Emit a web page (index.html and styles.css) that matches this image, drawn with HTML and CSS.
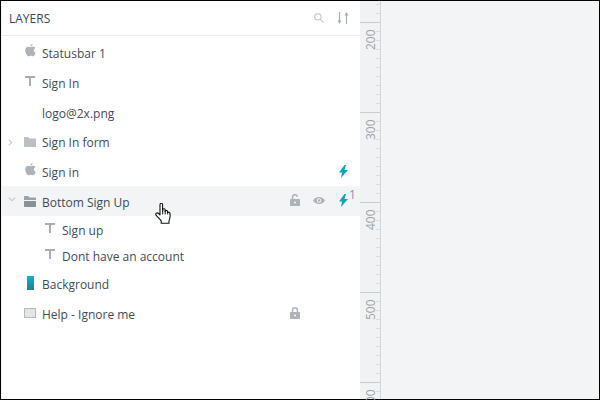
FILE: index.html
```html
<!DOCTYPE html>
<html lang="en">
<head>
<meta charset="utf-8">
<title>Layers</title>
<link rel="stylesheet" href="styles.css">
</head>
<body>
<svg class="defs" width="0" height="0" aria-hidden="true">
  <symbol id="apple" viewBox="0 0 12 14"><path d="M8.300 0c.1 1.300-1 2.600-2.300 2.600C5.900 1.300 7.100.1 8.300 0zM6 3.500c.7 0 1.500-.6 2.700-.6 1 0 2 .5 2.600 1.400-2.200 1.300-1.900 4.400.5 5.400-.6 1.500-1.900 3.700-3.100 3.700-.9 0-1.200-.6-2.300-.6s-1.500.6-2.300.6C2.600 13.400.2 10.200.2 7.100.2 4.600 1.800 3 3.500 3c1.100 0 1.900.5 2.500.5z"/></symbol>
  <symbol id="folder" viewBox="0 0 12 10"><path d="M0 .8A.8.800 0 0 1 .8 0h3.400l1.200 1.500h5.800a.8.800 0 0 1 .8.800v6.900a.8.800 0 0 1-.8.800H.8a.8.800 0 0 1-.8-.8z"/></symbol>
  <symbol id="folder-open" viewBox="0 0 12 11"><path d="M0 .8A.8.800 0 0 1 .8 0h3.400l1.200 1.500h5.800a.8.800 0 0 1 .8.800V4H0z"/><path class="folder-front" d="M0 5h12v5.200a.8.800 0 0 1-.8.800H.8a.8.800 0 0 1-.8-.8z"/></symbol>
  <symbol id="type" viewBox="0 0 10 10"><path d="M0 0h10v2H6v8H4V2H0z"/></symbol>
  <symbol id="bolt" viewBox="0 0 9 13"><path d="M5.500 0 0 7.500h3L2 13l7-8H5.500L7 0z"/></symbol>
  <symbol id="lock" viewBox="0 0 10 12"><path fill-rule="evenodd" d="M1.800 5V3.200a3.200 3.200 0 0 1 6.400 0V5h1a.8.800 0 0 1 .8.800v5.400a.8.800 0 0 1-.8.800H.8a.8.800 0 0 1-.8-.8V5.800A.8.800 0 0 1 .8 5zm1.500 0h3.400V3.200a1.700 1.700 0 0 0-3.400 0zM5 7.500a1 1 0 1 0 0 2 1 1 0 0 0 0-2z"/></symbol>
  <symbol id="unlock" viewBox="0 0 10 12"><path fill-rule="evenodd" d="M1.800 5V3.200a3.200 3.200 0 0 1 6.300-.8L6.700 3a1.700 1.700 0 0 0-3.400.2V5h5.900a.8.800 0 0 1 .8.800v5.400a.8.800 0 0 1-.8.800H.8a.8.800 0 0 1-.8-.8V5.800A.8.800 0 0 1 .8 5zM5 7.500a1 1 0 1 0 0 2 1 1 0 0 0 0-2z"/></symbol>
  <symbol id="eye" viewBox="0 0 12 7"><path fill-rule="evenodd" d="M6 0c2.600 0 4.800 1.500 6 3.500C10.800 5.500 8.600 7 6 7S1.200 5.500 0 3.500C1.200 1.500 3.400 0 6 0zm0 1.300a2.200 2.200 0 1 0 0 4.400 2.200 2.200 0 0 0 0-4.400z"/><circle cx="6" cy="3.500" r="1.200"/></symbol>
</svg>

<div class="frame">
  <section class="panel">
    <header class="panel-head">
      <h1 class="panel-title">LAYERS</h1>
      <div class="head-tools">
        <svg class="tool-search" viewBox="0 0 10 10"><circle cx="3.800" cy="3.800" r="3.200"/><path d="M6.200 6.200l3.500 3.500"/></svg>
        <svg class="tool-sort" viewBox="0 0 12 12"><path d="M2.500 0v9M9.500 12V3"/><path class="sort-head" d="M.5 8.500h4l-2 3.500zM7.500 3.500h4l-2-3.500z"/></svg>
      </div>
    </header>
    <ul class="layers">
      <li class="row"><span class="slot"><svg class="ico apple"><use href="#apple"/></svg></span><span class="name">Statusbar 1</span></li>
      <li class="row"><span class="slot"><svg class="ico type"><use href="#type"/></svg></span><span class="name">Sign In</span></li>
      <li class="row"><span class="slot"></span><span class="name">logo@2x.png</span></li>
      <li class="row"><svg class="caret caret-right" viewBox="0 0 5 7"><path d="M.7.7l3 2.800-3 2.800"/></svg><span class="slot"><svg class="ico folder"><use href="#folder"/></svg></span><span class="name">Sign In form</span></li>
      <li class="row"><span class="slot"><svg class="ico apple"><use href="#apple"/></svg></span><span class="name">Sign in</span><span class="actions"><svg class="bolt"><use href="#bolt"/></svg></span></li>
      <li class="row active"><svg class="caret caret-down" viewBox="0 0 8 5"><path d="M.7.7l3.300 3 3.300-3"/></svg><span class="slot"><svg class="ico folder-dark"><use href="#folder-open"/></svg></span><span class="name">Bottom Sign Up</span>
        <span class="actions"><svg class="lock"><use href="#unlock"/></svg><svg class="eye"><use href="#eye"/></svg><svg class="bolt"><use href="#bolt"/></svg><sup class="count">1</sup></span>
      </li>
      <li class="row child"><span class="slot"><svg class="ico type"><use href="#type"/></svg></span><span class="name">Sign up</span></li>
      <li class="row child"><span class="slot"><svg class="ico type"><use href="#type"/></svg></span><span class="name">Dont have an account</span></li>
      <li class="row"><span class="slot"><span class="swatch"></span></span><span class="name">Background</span></li>
      <li class="row"><span class="slot"><span class="rect"></span></span><span class="name">Help - Ignore me</span><span class="actions"><svg class="lock"><use href="#lock"/></svg></span></li>
    </ul>
    <svg class="hand" viewBox="0 0 18 24" preserveAspectRatio="none">
      <path d="M5 1.800c0-1 .6-1.500 1.300-1.500S7.600.800 7.600 1.800V9l.3-2.300c.8-.7 2-.5 2.300.5v2c.5-1.300 2.100-1.200 2.400 0v1.500c.5-1 2-1 2.300.3.400 2.500.2 5.800-.9 8.500v2.700H6.200v-2.700C4.500 17.500 3 15.500 1.300 13.500.3 12.300.7 11 1.800 10.800c1-.2 2.200.9 3.200 2.200z" fill="#fff" stroke="#111" stroke-width="1.100" stroke-linejoin="round"/>
      <path d="M7.700 7.500v5M10.200 8v4.500M12.700 9.500v3" fill="none" stroke="#111" stroke-width="1"/>
    </svg>
  </section>
  <aside class="ruler"><svg class="ruler-svg" id="ruler" width="20" height="398"></svg></aside>
  <main class="canvas"></main>
</div>
<script src="ruler.js"></script>
</body>
</html>
```

FILE: ruler.js
```js
var svg = document.getElementById('ruler');
var out = '';
for (var i = 0; i < 46; i++) {
  var y = 3 + i * 9;
  var major = (i - 2) % 10 === 0;
  if (y > 398) break;
  out += '<line x1="' + (major ? 0 : 16) + '" x2="20" y1="' + (y + 0.5) + '" y2="' + (y + 0.5) + '" stroke="' + (major ? '#c9cdd1' : '#d9dcdf') + '"/>';
  if (major) {
    var label = 200 + (i - 2) * 10;
    out += '<text transform="translate(15 ' + (y + 28) + ') rotate(-90)">' + label + '</text>';
  }
}
svg.innerHTML = out;
```

FILE: styles.css
```css
* { box-sizing: border-box; }
html, body { margin: 0; height: 100%; }
body { background: #000; font-family: "Open Sans", sans-serif; overflow: hidden; }
.defs { position: absolute; }

.frame {
  display: flex;
  width: 600px;
  height: 400px;
  border: 1px solid #000;
  background: #f3f4f6;
}
.panel {
  position: relative;
  width: 358px;
  margin-left: 1px;
  background: #fff;
  flex: none;
}
.panel-head {
  display: flex;
  align-items: center;
  justify-content: space-between;
  height: 35px;
  padding: 0 11px 0 7px;
  border-bottom: 1px solid #ebecee;
}
.panel-title { margin: 0; font-size: 12px; font-weight: 400; color: #3c4650; }
.head-tools { display: flex; align-items: center; gap: 13px; }
.tool-search { width: 10px; height: 10px; fill: none; stroke: #c4c8cb; stroke-width: 1.2; }
.tool-sort { width: 12px; height: 12px; fill: none; stroke: #a9aeb2; stroke-width: 1.2; }
.sort-head { fill: #a9aeb2; stroke: none; }

.layers { list-style: none; margin: 0; padding: 2px 0 0; }
.row {
  position: relative;
  display: flex;
  align-items: center;
  height: 29.7px;
  padding-left: 20px;
  font-size: 12px;
  color: #414b57;
}
.row.active { background: #f3f4f6; }
.row.child { height: 26.5px; padding-left: 40px; }
.slot { display: flex; justify-content: center; align-items: center; width: 16px; height: 16px; margin-right: 4px; flex: none; }
.name { white-space: nowrap; margin-top: 2px; }

.ico { fill: #aeb3b7; }
.apple { width: 11px; height: 13px; margin-top: -4px; }
.type { width: 10px; height: 10px; margin-top: -3px; fill: #a9aeb2; }
.folder { width: 12px; height: 10px; fill: #bcc0c4; }
.folder-dark { width: 12px; height: 11px; fill: #9ca1a5; }
.folder-front { fill: #8a9094; }
.caret { position: absolute; fill: none; stroke: #c4c8cb; stroke-width: 1.1; }
.caret-right { left: 6px; top: 12px; width: 5px; height: 7px; }
.caret-down { left: 6px; top: 11px; width: 8px; height: 5px; }
.swatch { display: block; width: 7px; height: 14px; margin-top: -2px; background: linear-gradient(#04b7c8, #2b7f8c); }
.rect { display: block; width: 12px; height: 10px; margin-top: -1px; background: #e3e5e7; border: 1px solid #b5b9bd; }

.actions { position: absolute; top: 0; bottom: 0; right: 0; width: 70px; }
.actions svg { position: absolute; fill: #aeb3b7; }
.actions .lock { left: 0; top: 8px; width: 10px; height: 12px; }
.actions .eye { left: 23px; top: 11px; width: 12px; height: 7px; }
.actions .bolt { left: 49px; top: 8px; width: 9px; height: 13px; fill: #0ba4bb; }
.count { position: absolute; left: 59px; top: 2px; margin: 0; font-size: 12px; line-height: 14px; color: #8d9398; }

.hand { position: absolute; left: 153px; top: 202px; width: 18px; height: 22px; }

.ruler { width: 20px; height: 100%; background: #f1f2f4; flex: none; }
.ruler-svg { display: block; overflow: visible; font-family: "Open Sans", sans-serif; font-size: 12px; fill: #9ea3a8; }
.canvas { flex: 1; background: #f3f4f6; border-left: 1px solid #d2d5d8; }
```
